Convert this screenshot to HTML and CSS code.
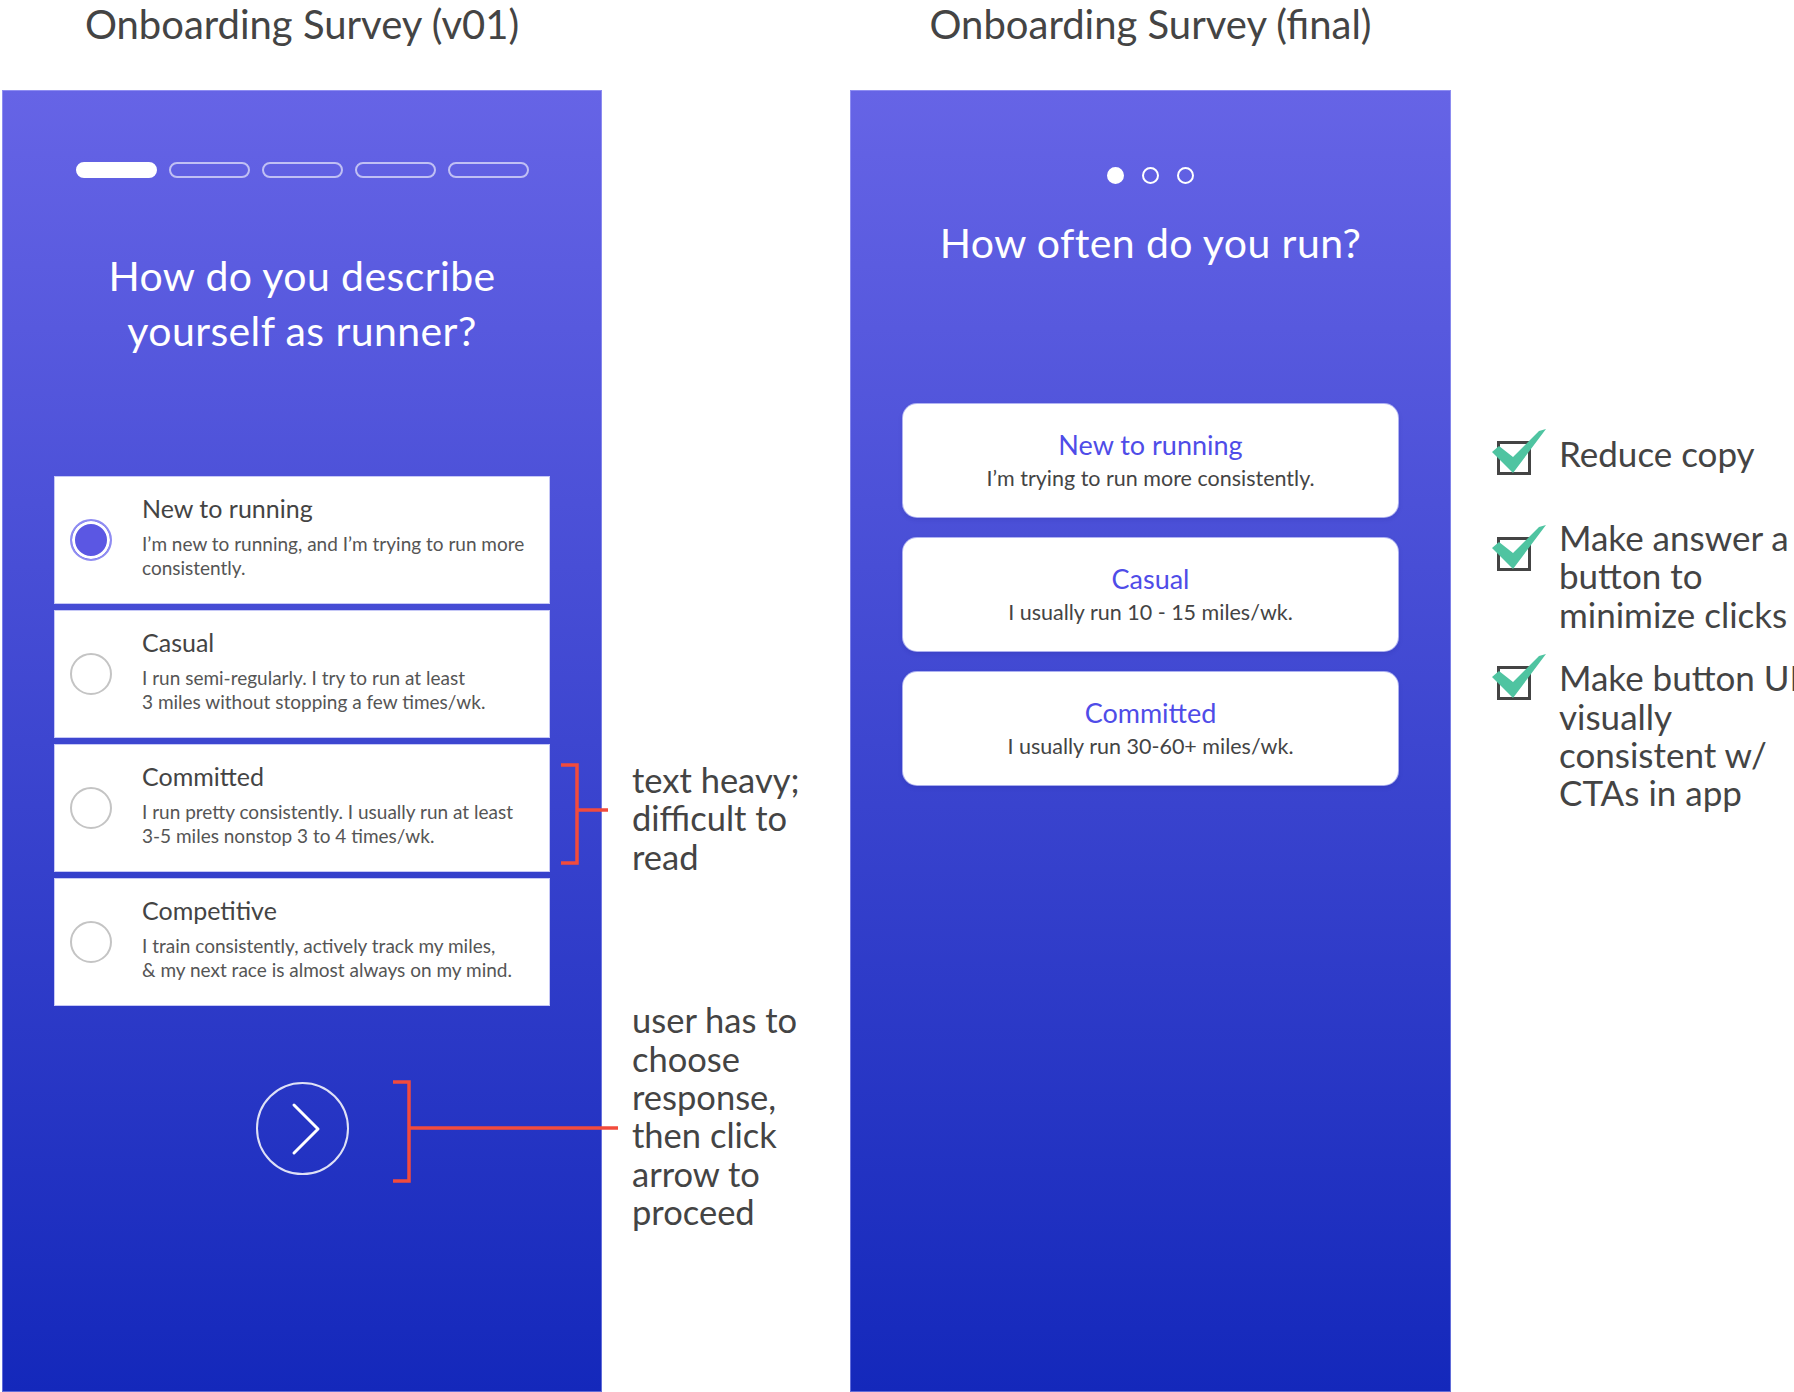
FILE: index.html
```html
<!DOCTYPE html>
<html lang="en">
<head>
<meta charset="utf-8">
<title>Onboarding Survey</title>
<link rel="stylesheet" href="styles.css">
</head>
<body>
<div class="page">
  <section class="screen-col">
    <h2 class="col-title">Onboarding Survey (v01)</h2>
    <div class="phone phone-v01">
      <div class="progress">
        <span class="seg on"></span><span class="seg"></span><span class="seg"></span><span class="seg"></span><span class="seg"></span>
      </div>
      <h1 class="question q-v01">How do you describe<br>yourself as runner?</h1>
      <div class="options">
        <div class="option">
          <span class="radio on"></span>
          <div class="opt-text">
            <div class="opt-title">New to running</div>
            <div class="opt-desc">I’m new to running, and I’m trying to run more<br>consistently.</div>
          </div>
        </div>
        <div class="option">
          <span class="radio"></span>
          <div class="opt-text">
            <div class="opt-title">Casual</div>
            <div class="opt-desc">I run semi-regularly. I try to run at least<br>3 miles without stopping a few times/wk.</div>
          </div>
        </div>
        <div class="option">
          <span class="radio"></span>
          <div class="opt-text">
            <div class="opt-title">Committed</div>
            <div class="opt-desc">I run pretty consistently. I usually run at least<br>3-5 miles nonstop 3 to 4 times/wk.</div>
          </div>
        </div>
        <div class="option">
          <span class="radio"></span>
          <div class="opt-text">
            <div class="opt-title">Competitive</div>
            <div class="opt-desc">I train consistently, actively track my miles,<br>&amp; my next race is almost always on my mind.</div>
          </div>
        </div>
      </div>
      <div class="next">
        <svg width="30" height="54" viewBox="0 0 30 54"><polyline points="3,3 27,27 3,51" fill="none" stroke="#fff" stroke-width="3" stroke-linecap="round" stroke-linejoin="round"/></svg>
      </div>
    </div>
  </section>

  <aside class="notes">
    <p class="note note-1">text heavy;<br>difficult to<br>read</p>
    <p class="note note-2">user has to<br>choose<br>response,<br>then click<br>arrow to<br>proceed</p>
  </aside>

  <section class="screen-col screen-final">
    <h2 class="col-title">Onboarding Survey (final)</h2>
    <div class="phone phone-final">
      <div class="dots"><span class="dot on"></span><span class="dot"></span><span class="dot"></span></div>
      <h1 class="question q-final">How often do you run?</h1>
      <div class="buttons">
        <div class="btn"><div class="btn-title">New to running</div><div class="btn-sub">I’m trying to run more consistently.</div></div>
        <div class="btn"><div class="btn-title">Casual</div><div class="btn-sub">I usually run 10 - 15 miles/wk.</div></div>
        <div class="btn"><div class="btn-title">Committed</div><div class="btn-sub">I usually run 30-60+ miles/wk.</div></div>
      </div>
    </div>
  </section>

  <aside class="checklist">
    <div class="check-item item-1">
      <svg class="chk chk-1" width="56" height="50" viewBox="0 0 56 50"><rect x="6.5" y="14.5" width="31" height="31" fill="none" stroke="#444" stroke-width="3"/><polygon points="0,24 7,18 21,29 47,3 54,1 21,45" fill="#4fc4a1"/></svg>
      <p class="check-text">Reduce copy</p>
    </div>
    <div class="check-item item-2">
      <svg class="chk chk-2" width="56" height="50" viewBox="0 0 56 50"><rect x="6.5" y="14.5" width="31" height="31" fill="none" stroke="#444" stroke-width="3"/><polygon points="0,24 7,18 21,29 47,3 54,1 21,45" fill="#4fc4a1"/></svg>
      <p class="check-text">Make answer a<br>button to<br>minimize clicks</p>
    </div>
    <div class="check-item item-3">
      <svg class="chk chk-3" width="56" height="50" viewBox="0 0 56 50"><rect x="6.5" y="14.5" width="31" height="31" fill="none" stroke="#444" stroke-width="3"/><polygon points="0,24 7,18 21,29 47,3 54,1 21,45" fill="#4fc4a1"/></svg>
      <p class="check-text">Make button UI<br>visually<br>consistent w/<br>CTAs in app</p>
    </div>
  </aside>
</div>

<svg class="brackets" width="1794" height="1392" viewBox="0 0 1794 1392">
  <g fill="none" stroke="#f24b3c" stroke-width="3.5">
    <polyline points="561,765 577,765 577,863 561,863"/>
    <line x1="577" y1="810" x2="608" y2="810"/>
    <polyline points="393,1082 409,1082 409,1181 393,1181"/>
    <line x1="409" y1="1128" x2="618" y2="1128"/>
  </g>
</svg>
</body>
</html>
```

FILE: styles.css
```css
* { box-sizing: border-box; }
html, body { margin: 0; padding: 0; }
body {
  width: 1794px;
  height: 1392px;
  overflow: hidden;
  background: #fff;
  font-family: "Lato", "Liberation Sans", sans-serif;
  color: #444;
  position: relative;
}
.page {
  display: flex;
  height: 1392px;
  padding-left: 2px;
}
.screen-col {
  width: 600px;
  flex: none;
  display: flex;
  flex-direction: column;
}
.screen-final { width: 601px; }
.col-title {
  margin: 0;
  height: 90px;
  font-size: 40px;
  line-height: 48px;
  font-weight: 400;
  text-align: center;
  color: #444;
}
.phone {
  flex: 1;
  display: flex;
  flex-direction: column;
  align-items: center;
  background: linear-gradient(180deg, #6664e6 0%, #3d46d0 50%, #1428bb 100%);
  box-shadow: inset 0 0 0 1px rgba(190, 190, 255, 0.45);
}
.phone-v01 { padding-top: 72px; }
.progress { display: flex; gap: 12px; }
.seg {
  width: 81px;
  height: 16px;
  border-radius: 8px;
  border: 2px solid rgba(255, 255, 255, 0.6);
}
.seg.on { background: #fff; border-color: #fff; }
.question {
  margin: 0;
  font-weight: 400;
  font-size: 41px;
  line-height: 55px;
  letter-spacing: 0.4px;
  color: #fff;
  text-align: center;
}
.q-v01 { margin-top: 70px; }
.options {
  margin-top: 118px;
  width: 496px;
  display: flex;
  flex-direction: column;
  gap: 6px;
}
.option {
  height: 128px;
  background: #fff;
  border: 1px solid #c6c8f6;
  display: flex;
  align-items: center;
  padding-left: 15px;
}
.radio {
  flex: none;
  width: 42px;
  height: 42px;
  border-radius: 50%;
  border: 2px solid #c4c4c4;
}
.radio.on {
  border-color: #8f8cf2;
  background: #5b57e3;
  box-shadow: inset 0 0 0 3px #fff;
}
.opt-text { margin-left: 30px; margin-top: -7px; }
.opt-title { font-size: 25px; line-height: 28px; color: #444; }
.opt-desc { margin-top: 10px; font-size: 19px; line-height: 24px; color: #555; }
.next {
  margin-top: 76px;
  width: 93px;
  height: 93px;
  border-radius: 50%;
  border: 2px solid rgba(255, 255, 255, 0.85);
  display: flex;
  align-items: center;
  justify-content: center;
  padding-left: 8px;
}

.notes {
  width: 248px;
  flex: none;
  padding-left: 30px;
}
.note {
  margin: 0;
  font-size: 34.5px;
  line-height: 38.4px;
  white-space: nowrap;
  color: #444;
}
.note-1 { margin-top: 761px; }
.note-2 { margin-top: 125px; }

.phone-final { padding-top: 77px; }
.dots { display: flex; gap: 18px; }
.dot {
  width: 17px;
  height: 17px;
  border-radius: 50%;
  border: 2px solid #fff;
}
.dot.on { background: #fff; }
.q-final { margin-top: 31px; }
.buttons {
  margin-top: 134px;
  width: 495px;
  display: flex;
  flex-direction: column;
  gap: 21px;
}
.btn {
  height: 113px;
  background: #fff;
  border-radius: 14px;
  display: flex;
  flex-direction: column;
  align-items: center;
  justify-content: center;
  text-align: center;
  padding-bottom: 2px;
  box-shadow: 0 0 0 1px rgba(220, 222, 255, 0.7), 0 2px 5px rgba(20, 20, 120, 0.18);
}
.btn-title { font-size: 27px; line-height: 30px; color: #4f4ce8; }
.btn-sub { margin-top: 6px; font-size: 21.5px; line-height: 24px; color: #444; }

.checklist {
  flex: none;
  width: 343px;
  padding-left: 41px;
  display: flex;
  flex-direction: column;
}
.check-item {
  display: flex;
  align-items: flex-start;
  gap: 11px;
}
.item-1 { margin-top: 434px; }
.item-2 { margin-top: 40px; }
.item-3 { margin-top: 25px; }
.chk { flex: none; }
.chk-1 { margin-top: -6px; }
.chk-2 { margin-top: 6px; }
.chk-3 { margin-top: -5px; }
.check-text {
  margin: 0;
  font-size: 35px;
  line-height: 38.4px;
  white-space: nowrap;
  color: #444;
}
.brackets {
  position: absolute;
  left: 0;
  top: 0;
  pointer-events: none;
}
```
